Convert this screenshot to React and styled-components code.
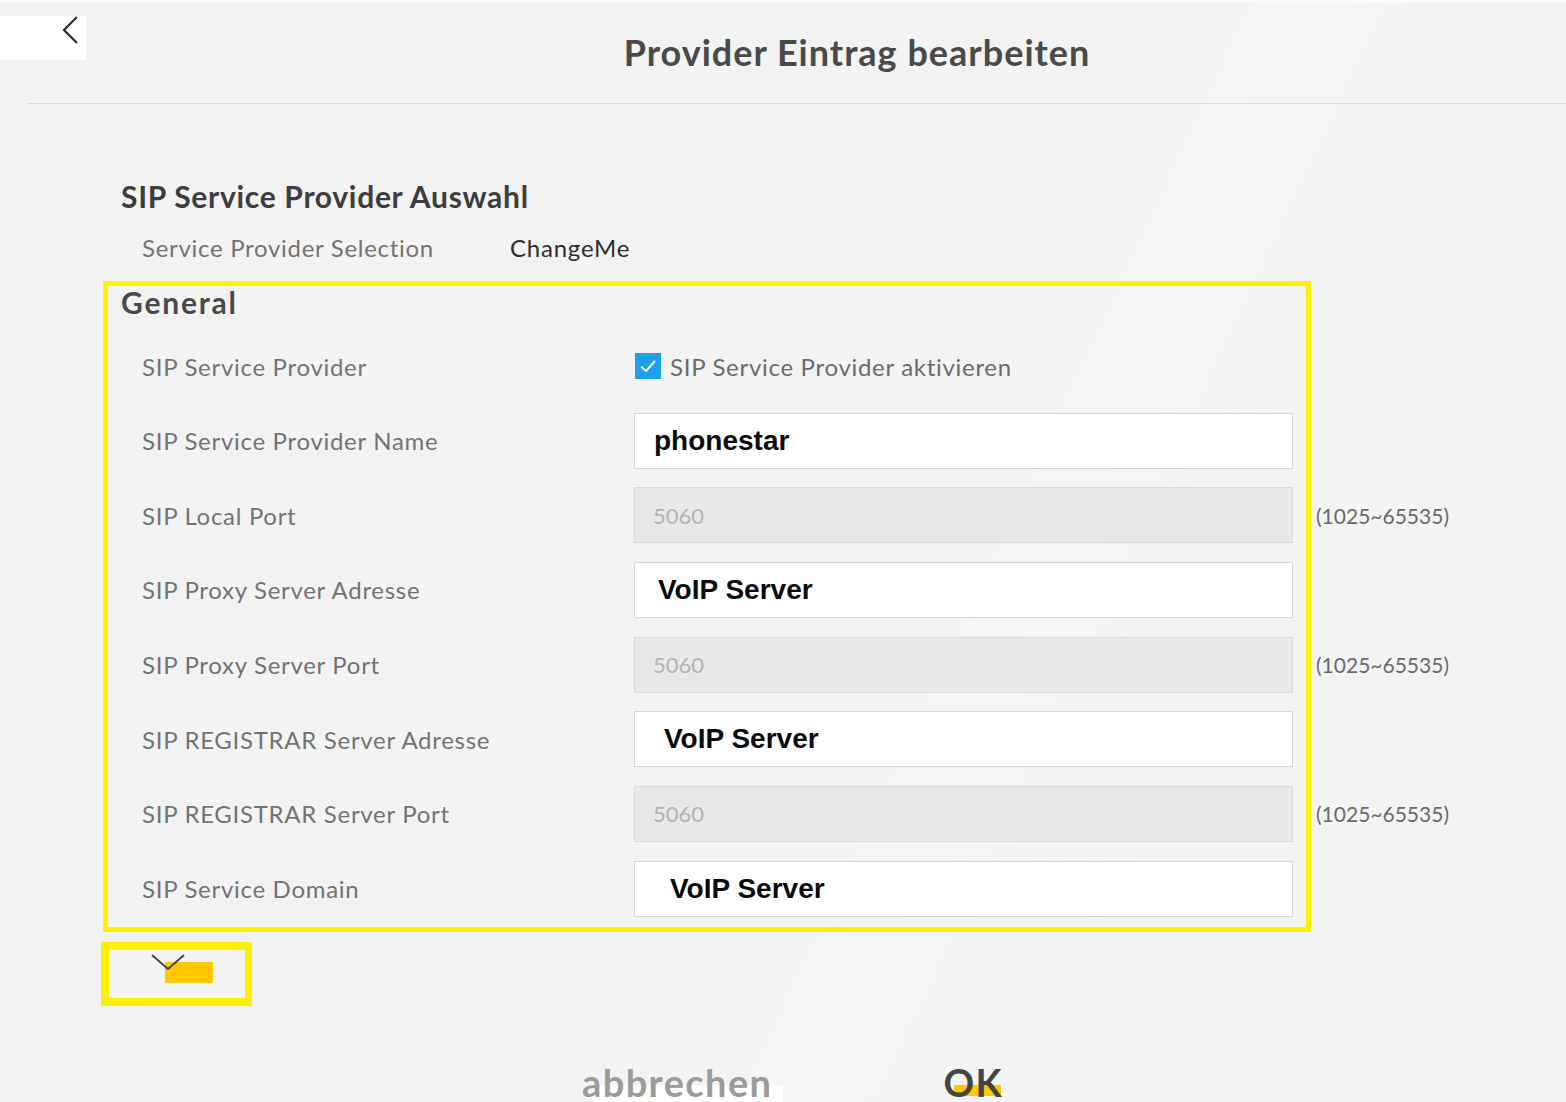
import React from 'react'
import styled, { createGlobalStyle } from 'styled-components'

const GlobalStyle = createGlobalStyle`
    html, body {
        margin: 0;
        padding: 0;
        background: #f3f3f3;
    }
    body {
        font-family: Lato, "Open Sans", sans-serif;
        overflow: hidden;
    }
`

const rows = [
    { label: 'SIP Service Provider', type: 'check', value: 'SIP Service Provider aktivieren' },
    { label: 'SIP Service Provider Name', type: 'text', value: 'phonestar', indent: 19 },
    { label: 'SIP Local Port', type: 'port', value: '5060' },
    { label: 'SIP Proxy Server Adresse', type: 'text', value: 'VoIP Server', indent: 23 },
    { label: 'SIP Proxy Server Port', type: 'port', value: '5060' },
    { label: 'SIP REGISTRAR Server Adresse', type: 'text', value: 'VoIP Server', indent: 29 },
    { label: 'SIP REGISTRAR Server Port', type: 'port', value: '5060' },
    { label: 'SIP Service Domain', type: 'text', value: 'VoIP Server', indent: 35 },
]

const App = () => {
    return (
        <Page>
            <GlobalStyle />
            <Header>
                <BackBox>
                    <svg width="20" height="32" viewBox="0 0 20 32">
                        <path d="M16 2 L3 15 L16 28" fill="none" stroke="#2b2b2b" strokeWidth="2.2" />
                    </svg>
                </BackBox>
                <Title>Provider Eintrag bearbeiten</Title>
            </Header>

            <Content>
                <SectionTitle>SIP Service Provider Auswahl</SectionTitle>
                <SelectionRow>
                    <Label>Service Provider Selection</Label>
                    <SelectionValue>ChangeMe</SelectionValue>
                </SelectionRow>

                <GeneralBox>
                    <GeneralTitle>General</GeneralTitle>
                    <Rows>
                        {rows.map(row => (
                            <Row key={row.label}>
                                <Label>{row.label}</Label>
                                {row.type === 'check' ? (
                                    <CheckWrap>
                                        <CheckBox>
                                            <svg width="18" height="14" viewBox="0 0 18 14">
                                                <path d="M2 7.5 L7 12 L16 2" fill="none" stroke="#fff" strokeWidth="2" />
                                            </svg>
                                        </CheckBox>
                                        <CheckText>{row.value}</CheckText>
                                    </CheckWrap>
                                ) : (
                                    <Field disabled={row.type === 'port'} indent={row.indent}>
                                        {row.value}
                                    </Field>
                                )}
                                {row.type === 'port' && <Range>(1025~65535)</Range>}
                            </Row>
                        ))}
                    </Rows>
                </GeneralBox>

                <ToggleBox>
                    <ToggleMark />
                    <svg width="36" height="18" viewBox="0 0 36 18">
                        <path d="M1 1 L17 15 L33 1" fill="none" stroke="#474747" strokeWidth="2" />
                    </svg>
                </ToggleBox>
            </Content>

            <Footer>
                <FooterButton muted>
                    <ButtonPatch color="#ffffff" style={{ left: 11, width: 190 }} />
                    <span>abbrechen</span>
                </FooterButton>
                <FooterButton>
                    <ButtonPatch color="#ffc800" style={{ left: 11, width: 47, height: 11 }} />
                    <span>OK</span>
                </FooterButton>
            </Footer>
        </Page>
    )
}

export default App

const Page = styled.div`
    width: 1566px;
    height: 1102px;
    overflow: hidden;
    border-top: 3px solid #fbfbfb;
    box-sizing: border-box;
    background: linear-gradient(115deg, #f3f3f3 0%, #f3f3f3 60%, #f5f5f5 60.3%, #f3f3f3 75%);
`

const Header = styled.header`
    position: relative;
    height: 101px;
    margin-left: 28px;
    border-bottom: 1.5px solid #dcdcdc;
    display: flex;
    align-items: center;
    justify-content: center;
    padding-left: 120px;
    box-sizing: border-box;
`

const BackBox = styled.div`
    position: absolute;
    left: -28px;
    top: 13px;
    width: 86px;
    height: 44px;
    background: #ffffff;
    display: flex;
    justify-content: flex-end;
    padding-right: 5px;
    box-sizing: border-box;
    svg {
        margin-top: -1px;
    }
`

const Title = styled.h1`
    margin: 0 0 3px 0;
    font-size: 36px;
    font-weight: 700;
    color: #4a4a4a;
    letter-spacing: 1px;
`

const Content = styled.main`
    padding: 74px 0 0 0;
`

const SectionTitle = styled.h2`
    margin: 0 0 0 121px;
    font-size: 30px;
    line-height: 36px;
    font-weight: 700;
    color: #3d3d3d;
    letter-spacing: 0.7px;
`

const SelectionRow = styled.div`
    display: flex;
    align-items: center;
    height: 40px;
    margin: 13px 0 14px 142px;
`

const Label = styled.span`
    font-size: 24px;
    color: #737373;
    letter-spacing: 0.7px;
    white-space: nowrap;
`

const SelectionValue = styled.span`
    margin-left: 76px;
    font-size: 24px;
    color: #2e2e2e;
    letter-spacing: 0.8px;
`

const GeneralBox = styled.section`
    margin-left: 103px;
    width: 1208px;
    height: 651px;
    border: 5px solid #fff200;
    box-sizing: border-box;
    padding: 1px 0 0 0;
`

const GeneralTitle = styled.h3`
    margin: 0 0 21px 13px;
    font-size: 30px;
    line-height: 30px;
    font-weight: 700;
    color: #4a4a4a;
    letter-spacing: 1.8px;
`

const Rows = styled.div`
    display: flex;
    flex-direction: column;
    gap: 18.67px;
    padding-left: 34px;
`

const Row = styled.div`
    display: grid;
    grid-template-columns: 469px 659px max-content;
    column-gap: 23px;
    align-items: center;
    height: 56px;
`

const CheckWrap = styled.div`
    display: flex;
    align-items: center;
    gap: 9px;
    padding-left: 1px;
`

const CheckBox = styled.span`
    width: 26px;
    height: 26px;
    background: #1aa1ec;
    display: flex;
    align-items: center;
    justify-content: center;
`

const CheckText = styled.span`
    font-size: 24px;
    color: #6b6b6b;
    letter-spacing: 0.7px;
`

const Field = styled.div`
    height: 56px;
    box-sizing: border-box;
    border: 1.5px solid ${p => (p.disabled ? '#d6dade' : '#d3d7dc')};
    background: ${p => (p.disabled ? '#e8e8e8' : '#ffffff')};
    display: flex;
    align-items: center;
    padding-left: ${p => (p.disabled ? 18 : p.indent)}px;
    font-family: ${p => (p.disabled ? 'Lato, sans-serif' : '"Liberation Sans", Arial, sans-serif')};
    font-weight: ${p => (p.disabled ? 400 : 700)};
    font-size: ${p => (p.disabled ? '22px' : '28px')};
    color: ${p => (p.disabled ? '#b3b3b3' : '#0a0a0a')};
`

const Range = styled.span`
    font-size: 21px;
    color: #6a6a6a;
    white-space: nowrap;
`

const ToggleBox = styled.div`
    position: relative;
    margin: 10px 0 0 101px;
    width: 151px;
    height: 64px;
    border: 8px solid #fff000;
    border-right-width: 7px;
    box-sizing: border-box;
    svg {
        position: absolute;
        left: 42px;
        top: 4px;
    }
`

const ToggleMark = styled.span`
    position: absolute;
    left: 56px;
    top: 12px;
    width: 48px;
    height: 21px;
    background: #ffc800;
`

const Footer = styled.footer`
    display: flex;
    gap: 171px;
    padding: 56px 0 0 582px;
`

const FooterButton = styled.div`
    position: relative;
    font-size: 38px;
    line-height: 40px;
    font-weight: 700;
    color: ${p => (p.muted ? '#9b9b9b' : '#454545')};
    letter-spacing: 1.4px;
    span {
        position: relative;
    }
`

const ButtonPatch = styled.i`
    position: absolute;
    top: 23px;
    height: 20px;
    background: ${p => p.color};
`
